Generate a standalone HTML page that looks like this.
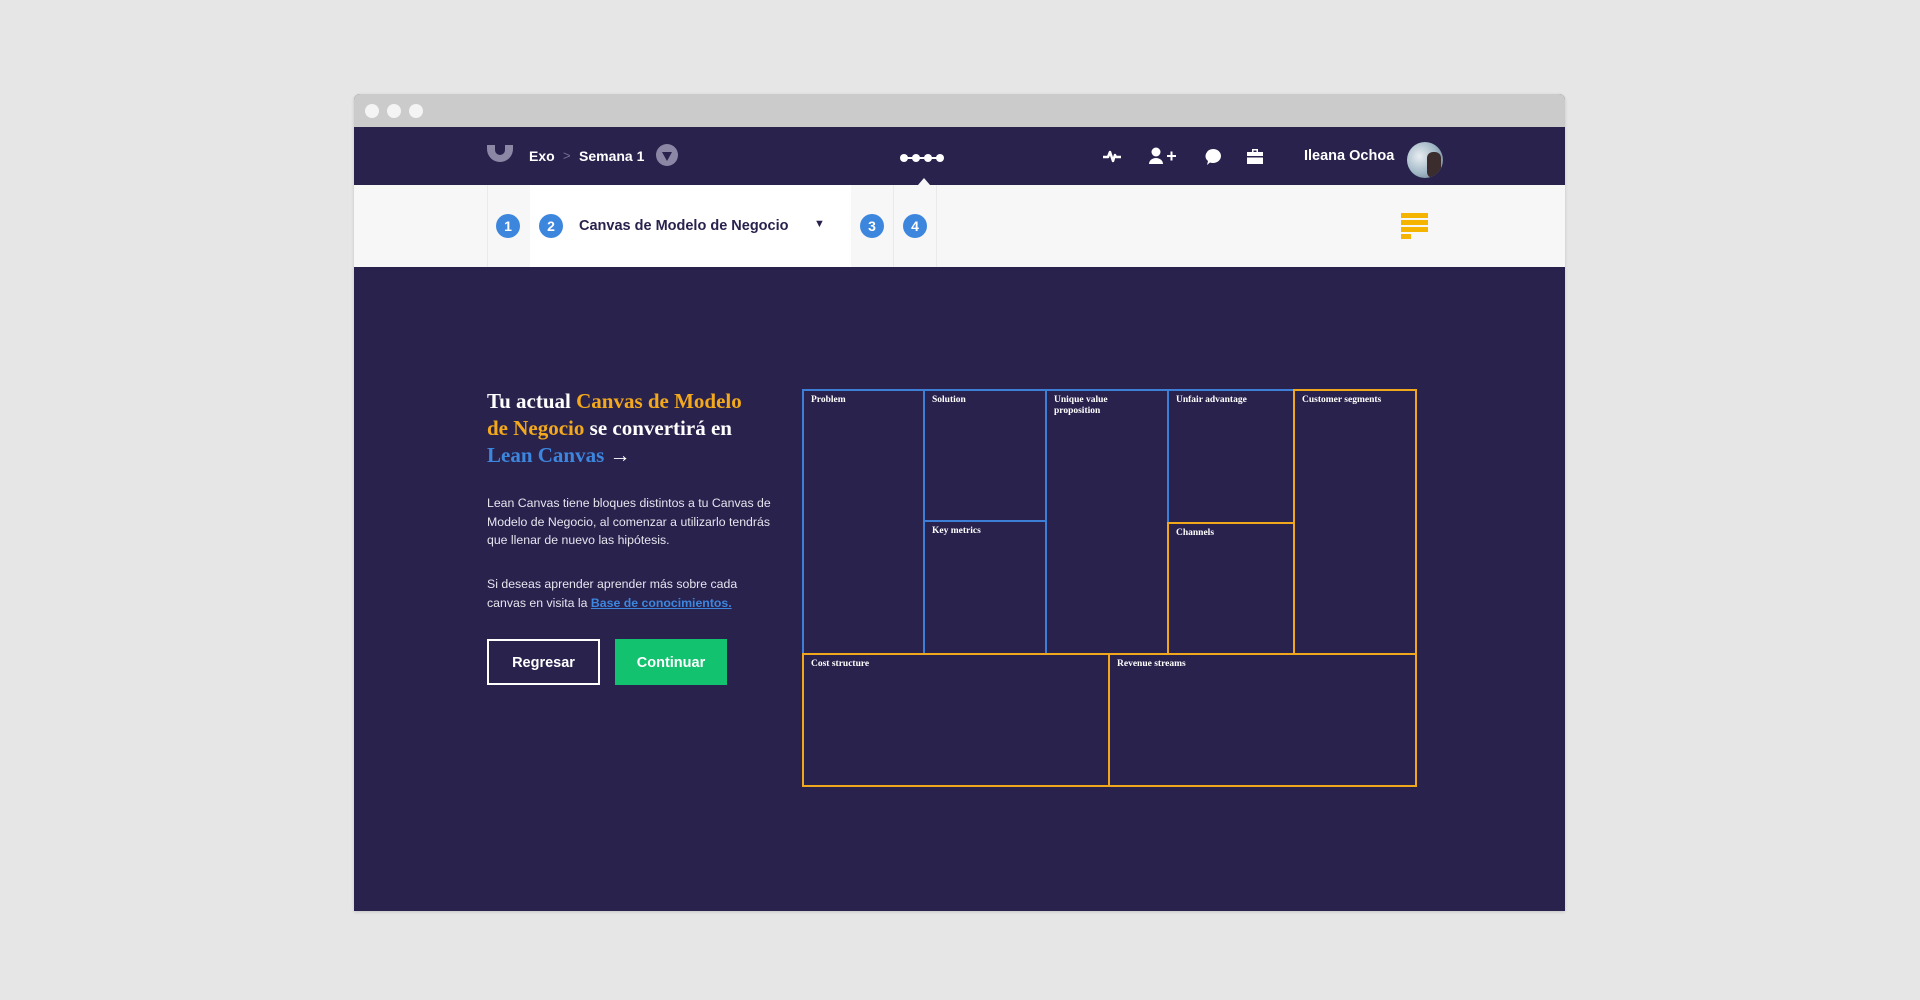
<!DOCTYPE html>
<html><head><meta charset="utf-8"><style>
*{margin:0;padding:0;box-sizing:border-box}
body{width:1920px;height:1000px;background:#e6e6e6;font-family:"Liberation Sans",sans-serif;position:relative;overflow:hidden}
.abs{position:absolute}
.win{left:354px;top:94px;width:1211px;height:817px;background:#28224d;border-radius:6px 6px 0 0;overflow:hidden;box-shadow:0 1px 3px rgba(0,0,0,.15)}
.title{left:0;top:0;width:1211px;height:33px;background:#cbcbcb}
.dot{width:14px;height:14px;border-radius:50%;background:#f4f4f4;top:10px}
.nav{left:0;top:33px;width:1211px;height:58px;background:#28224d;color:#fff}
.sub{left:0;top:91px;width:1211px;height:82px;background:#f7f7f7}
.num{width:24px;height:24px;border-radius:50%;background:#3d86de;color:#fff;font-size:14px;font-weight:bold;text-align:center;line-height:24px;top:29px}
.cell{border:2px solid #3d7fd6}
.y{border-color:#f0a71b}
.lab{font-family:"Liberation Serif",serif;font-weight:bold;color:#fff;font-size:9.5px;line-height:11px;padding:4px 7px}
</style></head><body>
<div class="abs win">
 <div class="abs title">
  <div class="abs dot" style="left:11px"></div>
  <div class="abs dot" style="left:33px"></div>
  <div class="abs dot" style="left:55px"></div>
 </div>
 <div class="abs nav">
  <svg class="abs" style="left:133px;top:18px" width="26" height="17" viewBox="0 0 26 17"><path d="M0 0h8v5a5 5 0 0 0 10 0V0h8v4a13 13 0 0 1-26 0z" fill="#8b87a4"/></svg>
  <div class="abs" style="left:175px;top:21px;font-size:14px;font-weight:bold">Exo</div>
  <div class="abs" style="left:209px;top:21px;font-size:13px;color:#77738f">&gt;</div>
  <div class="abs" style="left:225px;top:21px;font-size:14px;font-weight:bold">Semana 1</div>
  <div class="abs" style="left:302px;top:17px;width:22px;height:22px;border-radius:50%;background:#8b87a4"></div>
  <svg class="abs" style="left:306px;top:23px" width="14" height="12"><path d="M2 2h10l-5 9z" fill="#28224d"/></svg>
  <svg class="abs" style="left:545px;top:26px" width="46" height="10"><g fill="#fff"><circle cx="5" cy="5" r="4"/><circle cx="17" cy="5" r="4"/><circle cx="29" cy="5" r="4"/><circle cx="41" cy="5" r="4"/><rect x="5" y="4" width="36" height="2"/></g></svg>
  <svg class="abs" style="left:564px;top:50px" width="12" height="8"><path d="M0 8L6 1L12 8z" fill="#f7f7f7"/></svg>
  <svg class="abs" style="left:748px;top:21px" width="20" height="16"><path d="M1 9h5l2-5 3 9 2-6 1 2h5" stroke="#fff" stroke-width="2.5" fill="none" stroke-linejoin="round"/></svg>
  <svg class="abs" style="left:795px;top:20px" width="28" height="18"><g fill="#fff"><circle cx="7" cy="5" r="4.5"/><path d="M0 17a7 6 0 0 1 14 0z"/><rect x="18" y="8" width="9" height="2"/><rect x="21.5" y="4.5" width="2" height="9"/></g></svg>
  <svg class="abs" style="left:850px;top:21px" width="18" height="18"><path d="M9 1a8 7 0 1 1-3 13.5L3 17l1-4A8 7 0 0 1 9 1z" fill="#fff"/></svg>
  <svg class="abs" style="left:892px;top:21px" width="18" height="17"><path d="M6 1h6v3h5v12H1V4h5z" fill="#fff"/><rect x="7.5" y="2.5" width="3" height="1.5" fill="#28224d"/><rect x="1" y="8" width="16" height="1.5" fill="#28224d"/></svg>
  <div class="abs" style="left:950px;top:21px;font-size:14.5px;font-weight:bold">Ileana Ochoa</div>
  <div class="abs" style="left:1053px;top:15px;width:36px;height:36px;border-radius:50%;background:radial-gradient(circle at 35% 40%,#e8eef2,#9fb5c4 55%,#5a6b7a);overflow:hidden"><div style="position:absolute;left:20px;top:10px;width:14px;height:26px;background:#3b2c2e;border-radius:6px"></div></div>
 </div>
 <div class="abs sub">
  <div class="abs" style="left:133px;top:0;width:43px;height:82px;border-left:1px solid #eaeaea"></div>
  <div class="abs" style="left:176px;top:0;width:321px;height:82px;background:#fff"></div>
  <div class="abs" style="left:497px;top:0;width:43px;height:82px;border-right:1px solid #eaeaea"></div>
  <div class="abs" style="left:540px;top:0;width:43px;height:82px;border-right:1px solid #eaeaea"></div>
  <div class="abs num" style="left:142px">1</div>
  <div class="abs num" style="left:185px">2</div>
  <div class="abs" style="left:225px;top:33px;font-size:14.5px;font-weight:bold;color:#28224d">Canvas de Modelo de Negocio</div>
  <div class="abs" style="left:460px;top:33px;font-size:11px;color:#28224d">▼</div>
  <div class="abs num" style="left:506px">3</div>
  <div class="abs num" style="left:549px">4</div>
  <div class="abs" style="left:1047px;top:28px;width:27px;height:5px;background:#f4b400"></div>
  <div class="abs" style="left:1047px;top:35px;width:27px;height:5px;background:#f4b400"></div>
  <div class="abs" style="left:1047px;top:42px;width:27px;height:5px;background:#f4b400"></div>
  <div class="abs" style="left:1047px;top:49px;width:10px;height:5px;background:#f4b400"></div>
 </div>
 <div class="abs" style="left:133px;top:294px;width:320px;white-space:nowrap;font-family:'Liberation Serif',serif;font-weight:bold;font-size:21px;line-height:27px;color:#fff">Tu actual <span style="color:#f4a91c">Canvas de Modelo</span><br><span style="color:#f4a91c">de Negocio</span> se convertirá en<br><span style="color:#3d86de">Lean Canvas</span> →</div>
 <div class="abs" style="left:133px;top:400px;width:300px;font-size:12.3px;line-height:18.5px;color:#e6e5ee">Lean Canvas tiene bloques distintos a tu Canvas de Modelo de Negocio, al comenzar a utilizarlo tendrás que llenar de nuevo las hipótesis.</div>
 <div class="abs" style="left:133px;top:481px;width:290px;font-size:12.3px;line-height:18.5px;color:#e6e5ee">Si deseas aprender aprender más sobre cada canvas en visita la <span style="color:#3d86de;text-decoration:underline;font-weight:bold">Base de conocimientos.</span></div>
 <div class="abs" style="left:133px;top:545px;width:113px;height:46px;border:2px solid #fff;color:#fff;font-weight:bold;font-size:14.5px;text-align:center;line-height:44px">Regresar</div>
 <div class="abs" style="left:261px;top:545px;width:112px;height:46px;background:#12c26e;color:#fff;font-weight:bold;font-size:14.5px;text-align:center;line-height:48px">Continuar</div>
 <div class="abs cell" style="left:448px;top:295px;width:123px;height:266px"><div class="lab">Problem</div></div>
 <div class="abs cell" style="left:569px;top:295px;width:124px;height:133px"><div class="lab">Solution</div></div>
 <div class="abs cell" style="left:569px;top:426px;width:124px;height:135px"><div class="lab">Key metrics</div></div>
 <div class="abs cell" style="left:691px;top:295px;width:124px;height:266px"><div class="lab">Unique value<br>proposition</div></div>
 <div class="abs cell" style="left:813px;top:295px;width:128px;height:135px"><div class="lab">Unfair advantage</div></div>
 <div class="abs cell y" style="left:813px;top:428px;width:128px;height:133px"><div class="lab">Channels</div></div>
 <div class="abs cell y" style="left:939px;top:295px;width:124px;height:266px"><div class="lab">Customer segments</div></div>
 <div class="abs cell y" style="left:448px;top:559px;width:308px;height:134px"><div class="lab">Cost structure</div></div>
 <div class="abs cell y" style="left:754px;top:559px;width:309px;height:134px"><div class="lab">Revenue streams</div></div>
</div>
</body></html>
